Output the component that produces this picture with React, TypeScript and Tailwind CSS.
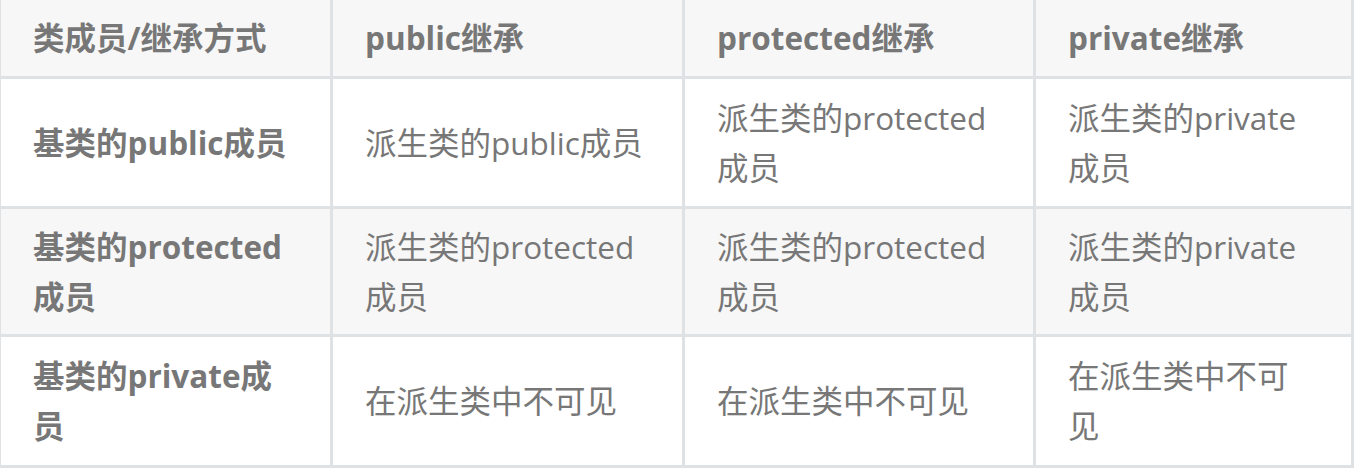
const rows: string[][] = [
  ['基类的public成员', '派生类的public成员', '派生类的protected成员', '派生类的private成员'],
  ['基类的protected成员', '派生类的protected成员', '派生类的protected成员', '派生类的private成员'],
  ['基类的private成员', '在派生类中不可见', '在派生类中不可见', '在派生类中不可见'],
];

const headers = ['类成员/继承方式', 'public继承', 'protected继承', 'private继承'];

const rowHeights = ['h-[127px]', 'h-[125px]', 'h-[128px]'];

export default function App() {
  return (
    <div
      className="bg-white w-[1355px] h-[469px] text-[#777] text-[31.5px] leading-[50px]"
      style={{ fontFamily: '"Open Sans", "Noto Sans CJK SC", sans-serif' }}
    >
      <div className="w-[1354px] bg-[#dfe2e5] pl-px pr-[3px] pb-[3px] grid grid-cols-[329px_349px_348px_1fr] gap-[3px]">
        {headers.map((h) => (
          <div key={h} className="h-[76px] bg-[#f7f7f7] px-8 flex items-center font-bold">
            {h}
          </div>
        ))}
        {rows.map((row, i) =>
          row.map((cell, j) => (
            <div
              key={`${i}-${j}`}
              className={`${rowHeights[i]} ${i === 1 ? 'bg-[#f7f7f7]' : 'bg-white'} px-8 flex items-center ${
                j === 0 ? 'font-bold' : ''
              }`}
            >
              <span>{cell}</span>
            </div>
          )),
        )}
      </div>
    </div>
  );
}
